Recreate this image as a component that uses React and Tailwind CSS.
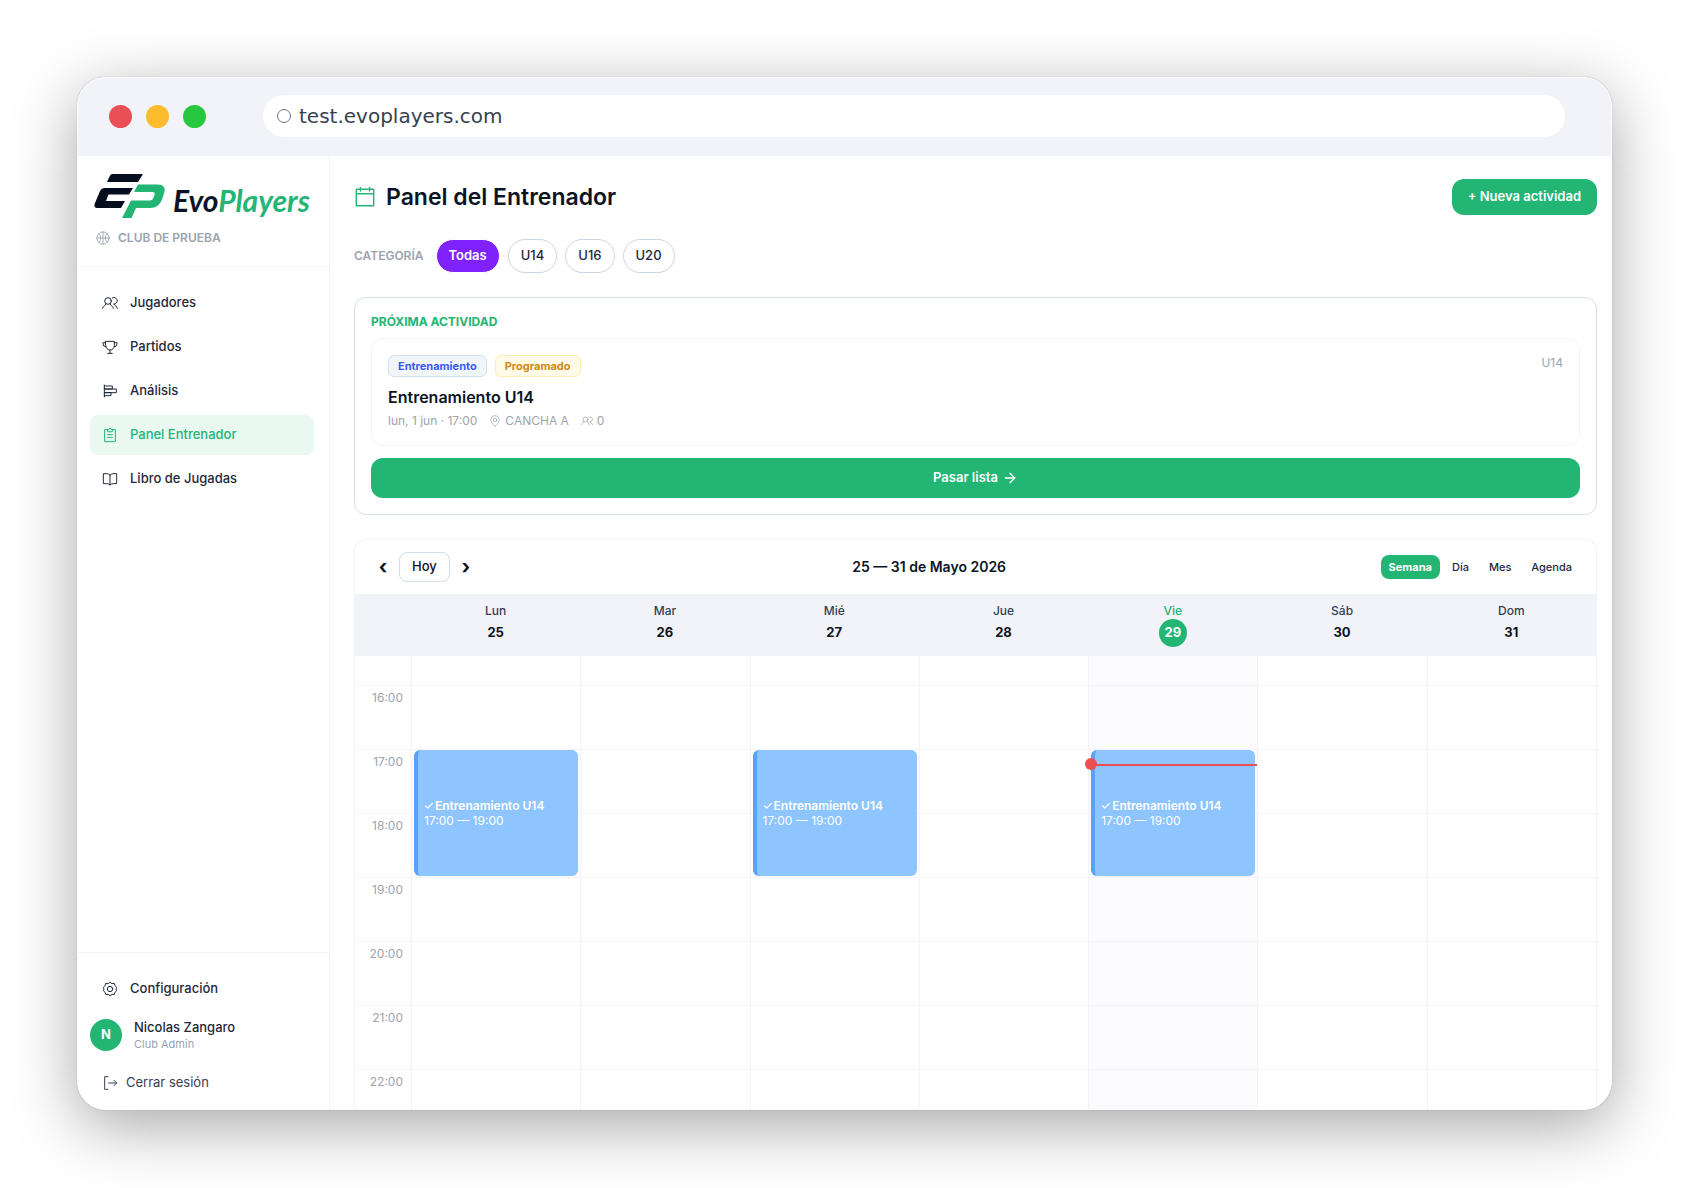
import { ArrowRight, Check } from 'lucide-react';

const navItems = [
  { label: 'Jugadores', icon: PlayersIcon },
  { label: 'Partidos', icon: TrophyIcon },
  { label: 'Análisis', icon: AnalysisIcon },
  { label: 'Panel Entrenador', icon: ClipboardIcon, active: true },
  { label: 'Libro de Jugadas', icon: BookIcon },
];

const categories = ['Todas', 'U14', 'U16', 'U20'];
const views = ['Semana', 'Día', 'Mes', 'Agenda'];

const days = [
  { name: 'Lun', number: 25, training: true },
  { name: 'Mar', number: 26 },
  { name: 'Mié', number: 27, training: true },
  { name: 'Jue', number: 28 },
  { name: 'Vie', number: 29, training: true, today: true },
  { name: 'Sáb', number: 30 },
  { name: 'Dom', number: 31 },
];

const hours = ['16:00', '17:00', '18:00', '19:00', '20:00', '21:00', '22:00'];

function Icon({ className = 'size-4', strokeWidth = 1.5, children }) {
  return (
    <svg
      viewBox="0 0 24 24"
      fill="none"
      stroke="currentColor"
      strokeWidth={strokeWidth}
      strokeLinecap="round"
      strokeLinejoin="round"
      className={`shrink-0 ${className}`}
      aria-hidden="true"
    >
      {children}
    </svg>
  );
}

function PlayersIcon(props) {
  return (
    <Icon {...props}>
      <circle cx="9" cy="9" r="5" />
      <path d="M1 20c.5-2 1.800-3.500 3.500-4.500L6 13M17 20c-.5-2-1.800-3.500-3.500-4.500L12 13" />
      <path d="M15.500 4.300a5 5 0 1 1 2.500 9.400M18 13.700l1.500 1.800c1.700 1 3 2.500 3.500 4.500" />
    </Icon>
  );
}

function TrophyIcon(props) {
  return (
    <Icon {...props}>
      <path d="M5.500 3.500h13v6.500a6.500 6.500 0 0 1-13 0z" />
      <path d="M5.500 5.500H1.500v2a4 4 0 0 0 4.300 4M18.500 5.500h4v2a4 4 0 0 1-4.300 4" />
      <path d="M12 16.500V21M8.500 21.500h7" />
    </Icon>
  );
}

function AnalysisIcon(props) {
  return (
    <Icon {...props}>
      <path d="M3.500 3v18" />
      <path d="M3.500 4.500h12v4.500h-12M3.500 9h18v5.500h-18M3.500 14.500h10v4.500h-10" />
    </Icon>
  );
}

function ClipboardIcon(props) {
  return (
    <Icon {...props}>
      <path d="M8.500 4H4v18h16V4h-4.500" />
      <path d="M8.500 6.500V3.500h2a1.500 1.500 0 0 1 3 0h2v3z" />
      <path d="M8.500 11.500h7M8.500 15.500h7" />
    </Icon>
  );
}

function BookIcon(props) {
  return (
    <Icon {...props}>
      <path d="M12 6c-1.500-1.600-3.500-2-6-2H2v15h5c2.200 0 4 .6 5 2 1-1.400 2.800-2 5-2h5V4h-4c-2.500 0-4.500.4-6 2zM12 6v15" />
    </Icon>
  );
}

function GearIcon(props) {
  return (
    <Icon {...props}>
      <path d="M12 2l3 2 3.500-.3 1 3.400L22 9.500 21 12l1 2.500-2.500 2.400-1 3.400L15 20l-3 2-3-2-3.500.3-1-3.400L2 14.500 3 12 2 9.500l2.500-2.400 1-3.400L9 4z" />
      <circle cx="12" cy="12" r="4" />
    </Icon>
  );
}

function LogoutIcon(props) {
  return (
    <Icon {...props}>
      <path d="M9 2.500H4v19h5" />
      <path d="M10 12h12M18 8l4 4-4 4" />
    </Icon>
  );
}

function BallIcon(props) {
  return (
    <Icon {...props}>
      <circle cx="12" cy="12" r="10.500" />
      <path d="M12 1.500v21M1.500 12h21M5 4.500c4 4.500 4 10.500 0 15M19 4.500c-4 4.500-4 10.500 0 15" />
    </Icon>
  );
}

function PinIcon(props) {
  return (
    <Icon {...props}>
      <path d="M12 22.500s8.500-6.500 8.500-12.500a8.500 8.500 0 0 0-17 0c0 6 8.500 12.500 8.500 12.500z" />
      <circle cx="12" cy="10" r="3.500" />
    </Icon>
  );
}

function CalendarIcon(props) {
  return (
    <Icon {...props}>
      <path d="M2.500 3.500h19v18h-19zM2.500 8.500h19M7 1.500v4M17 1.500v4" />
    </Icon>
  );
}

function Logo() {
  return (
    <a href="#" className="flex items-end gap-2 px-4" aria-label="EvoPlayers">
      <svg viewBox="0 0 71 44" className="h-11 w-[71px] shrink-0" aria-hidden="true">
        <path d="M18 0h31l-5 8H13l2.500-5.500Q16.500 0 18 0z" fill="#060d1c" />
        <path d="M10 14h29l-4 6.500H14.500l-2.500 6.500H31L27 34H4q-5 0-3-5l5-12q1.500-3 4-3z" fill="#060d1c" />
        <path d="M44 10.500h19q10 0 7 9l-2 6q-3 8.500-12 8.500H42l-4.500 10H28l9-17.500H56q2.500 0 3.500-3l1-2.500q1-3-2-3H40z" fill="#23b574" />
      </svg>
      <span className="font-['Lato'] text-3xl leading-9 font-bold text-[#0b1424] italic">
        Evo<span className="text-[#23b574]">Players</span>
      </span>
    </a>
  );
}

function Sidebar() {
  return (
    <aside className="flex w-[252px] shrink-0 flex-col border-r border-[#f3f4f7]">
      <div className="border-b border-[#f3f4f7] pt-[18px] pb-5">
        <Logo />
        <div className="mt-3 flex items-center gap-2 px-[18px] text-xs leading-4 font-semibold text-[#9ca3af]">
          <BallIcon className="size-[14px]" />
          CLUB DE PRUEBA
        </div>
      </div>

      <nav className="flex flex-1 flex-col gap-1 pt-4 pr-[15px] pl-3">
        {navItems.map((item) => {
          const ItemIcon = item.icon;
          return (
            <a
              key={item.label}
              href="#"
              className={`flex h-10 items-center gap-3 rounded-lg px-3 text-[13px] font-medium ${
                item.active ? 'bg-[#e9f8f1] text-[#23b574]' : 'text-[#1e293b]'
              }`}
            >
              <ItemIcon />
              {item.label}
            </a>
          );
        })}
      </nav>

      <div className="border-t border-[#f3f4f7] px-3 pt-4 pb-2">
        <a href="#" className="flex h-10 items-center gap-3 px-3 text-[13px] font-medium text-[#1e293b]">
          <GearIcon />
          Configuración
        </a>
        <div className="flex h-[52px] items-center gap-3">
          <div className="flex size-8 items-center justify-center rounded-full bg-[#23b574] text-[13px] font-bold text-white">
            N
          </div>
          <div>
            <p className="text-[13px] leading-[18px] font-medium text-[#1e293b]">Nicolas Zangaro</p>
            <p className="text-[11px] leading-4 text-[#9ca3af]">Club Admin</p>
          </div>
        </div>
        <button className="mt-1 flex h-9 items-center gap-2 px-3 text-[13px] text-[#334155]">
          <LogoutIcon />
          Cerrar sesión
        </button>
      </div>
    </aside>
  );
}

function NextActivity() {
  return (
    <section className="mt-6 rounded-xl border border-[#d3dfe8] p-4">
      <h2 className="text-xs leading-4 font-bold text-[#23b574]">PRÓXIMA ACTIVIDAD</h2>
      <div className="mt-2 flex items-start justify-between rounded-xl border border-[#f3f4f7] px-4 pt-4 pb-3">
        <div>
          <div className="flex gap-2 text-[11px] font-bold">
            <span className="rounded-md border border-[#d5e0ee] bg-[#f1f6f9] px-[9px] leading-5 text-[#3b5bf0]">
              Entrenamiento
            </span>
            <span className="rounded-md border border-[#fdeeb0] bg-[#fffbe8] px-[9px] leading-5 text-[#cd8a14]">
              Programado
            </span>
          </div>
          <h3 className="mt-2 text-base font-semibold text-[#0b1424]">Entrenamiento U14</h3>
          <div className="flex items-center gap-3 text-xs leading-6 text-[#9ca3af]">
            <span>lun, 1 jun · 17:00</span>
            <span className="flex items-center gap-1">
              <PinIcon className="size-3" />
              CANCHA A
            </span>
            <span className="flex items-center gap-1">
              <PlayersIcon className="size-3" />0
            </span>
          </div>
        </div>
        <span className="text-xs leading-4 text-[#9ca3af]">U14</span>
      </div>
      <button className="mt-3 flex h-10 w-full items-center justify-center gap-1 rounded-xl bg-[#23b574] text-[13px] font-semibold text-white">
        Pasar lista
        <ArrowRight className="size-4" />
      </button>
    </section>
  );
}

function TrainingEvent() {
  return (
    <div className="absolute inset-x-0.5 top-[94px] flex h-[126px] flex-col justify-center rounded-md border-l-4 border-[#5aa2f7] bg-[#8ec5ff] px-1.5 text-xs leading-[15px] text-white">
      <p className="flex items-center font-semibold">
        <Check className="mr-px size-2.5" strokeWidth={3} />
        Entrenamiento U14
      </p>
      <p>17:00 — 19:00</p>
    </div>
  );
}

function WeekCalendar() {
  return (
    <section className="mt-6 flex min-h-0 flex-1 flex-col overflow-hidden rounded-t-xl border border-b-0 border-[#f3f4f7]">
      <div className="flex h-[54px] shrink-0 items-center justify-between px-4">
        <div className="flex items-center gap-1 text-[#0b1424]">
          <button className="w-6 text-xl font-bold" aria-label="Semana anterior">‹</button>
          <button className="h-[30px] rounded-lg border border-[#d3dce8] px-3 text-[13px] font-medium">Hoy</button>
          <button className="w-6 text-xl font-bold" aria-label="Semana siguiente">›</button>
        </div>
        <h2 className="text-sm font-semibold text-[#0b1424]">25 — 31 de Mayo 2026</h2>
        <div className="flex gap-1 text-[11px] font-medium text-[#1e293b]">
          {views.map((view) => (
            <button
              key={view}
              className={`h-6 rounded-lg px-2 ${view === 'Semana' ? 'bg-[#23b574] font-bold text-white' : ''}`}
            >
              {view}
            </button>
          ))}
        </div>
      </div>

      {/* Day names */}
      <div className="grid h-[62px] shrink-0 grid-cols-[56px_repeat(7,1fr)] bg-[#f1f3f8] pt-[9px]">
        <div />
        {days.map((day) => (
          <div key={day.name} className="flex flex-col items-center">
            <span className={`text-xs leading-4 font-medium ${day.today ? 'text-[#23b574]' : 'text-[#334155]'}`}>
              {day.name}
            </span>
            <span
              className={`flex size-7 items-center justify-center rounded-full text-[13px] font-bold ${
                day.today ? 'bg-[#23b574] text-white' : 'text-[#0b1424]'
              }`}
            >
              {day.number}
            </span>
          </div>
        ))}
      </div>

      {/* Hours and events */}
      <div className="grid min-h-0 flex-1 grid-cols-[56px_repeat(7,1fr)] overflow-hidden">
        <div className="text-right text-xs text-[#9ca3af]">
          <div className="h-[29px]" />
          {hours.map((hour) => (
            <div key={hour} className="h-16 border-t border-[#f3f4f7] pt-1 pr-2">
              {hour}
            </div>
          ))}
        </div>
        {days.map((day) => (
          <div key={day.name} className={`relative border-l border-[#f3f4f7] ${day.today ? 'bg-[#fbfbfd]' : ''}`}>
            <div className="h-[29px]" />
            {hours.map((hour) => (
              <div key={hour} className="h-16 border-t border-[#f3f4f7]" />
            ))}
            {day.training && <TrainingEvent />}
            {day.today && (
              <div className="absolute inset-x-0 top-[108px] h-0.5 bg-[#ec4e53]">
                <span className="absolute -top-[6px] -left-1 size-3 rounded-full bg-[#ec4e53]" />
              </div>
            )}
          </div>
        ))}
      </div>
    </section>
  );
}

export default function App() {
  return (
    <div className="h-screen bg-white px-[77px] pt-[77px] pb-[78px] font-['Inter',sans-serif]">
      <div className="flex h-full flex-col overflow-hidden rounded-[28px] border border-white bg-white shadow-[0_0_1px_rgba(0,0,0,0.4),0_16px_64px_rgba(0,0,0,0.35)]">
        {/* Browser bar */}
        <div className="flex h-[78px] shrink-0 items-center gap-[14px] bg-[#f1f3f8] pr-[46px] pb-0.5 pl-[31px]">
          <span className="size-[23px] rounded-full bg-[#ea4f57]" />
          <span className="size-[23px] rounded-full bg-[#fdbc2e]" />
          <span className="size-[23px] rounded-full bg-[#27c840]" />
          <div className="ml-[43px] flex h-[42px] flex-1 items-center gap-2 rounded-full bg-white pl-[14px]">
            <span className="size-[14px] rounded-full border border-[#64748b]" />
            <input
              aria-label="Dirección"
              defaultValue="test.evoplayers.com"
              className="flex-1 font-['DejaVu_Sans',sans-serif] text-xl text-[#374151] outline-none"
            />
          </div>
        </div>

        <div className="flex min-h-0 flex-1">
          <Sidebar />
          <main className="flex min-w-0 flex-1 flex-col pt-[23px] pr-[14px] pl-6">
            <header className="flex items-center justify-between">
              <h1 className="flex items-center gap-[10px] text-[23px] leading-8 font-semibold text-[#0b1424]">
                <CalendarIcon className="size-[22px] text-[#23b574]" />
                Panel del Entrenador
              </h1>
              <button className="h-9 rounded-xl bg-[#23b574] px-4 text-[13px] font-semibold text-white">
                + Nueva actividad
              </button>
            </header>

            <div className="mt-6 flex items-center gap-2 text-[13px]">
              <span className="mr-1 text-xs font-semibold text-[#9ca3af]">CATEGORÍA</span>
              {categories.map((category) => (
                <button
                  key={category}
                  className={`h-[34px] rounded-full border px-3 ${
                    category === 'Todas'
                      ? 'border-white bg-[#7f22fe] font-semibold text-white'
                      : 'border-[#cdd5e5] font-medium text-[#1e293b]'
                  }`}
                >
                  {category}
                </button>
              ))}
            </div>

            <NextActivity />
            <WeekCalendar />
          </main>
        </div>
      </div>
    </div>
  );
}
